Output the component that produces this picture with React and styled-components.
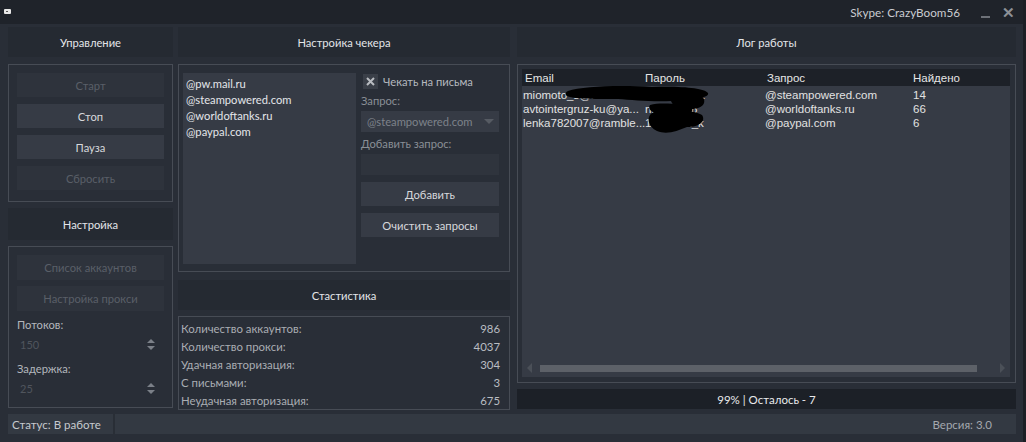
import React from "react";
import styled, { createGlobalStyle } from "styled-components";

const Global = createGlobalStyle`
  html, body { margin: 0; padding: 0; background: #1c1f25; overflow: hidden; }
  body { font-family: Lato, "Noto Sans", sans-serif; font-size: 11px; }
  * { box-sizing: border-box; }
`;

const Window = styled.div`
  width: 1023px;
  height: 442px;
  background: #292e37;
  display: flex;
  flex-direction: column;
`;

const TitleBar = styled.div`
  height: 24px;
  background: #1f232a;
  display: flex;
  align-items: center;
  padding: 0 0 0 4px;
  color: #c9ccd1;
`;

const AppIcon = styled.div`
  width: 7px;
  height: 5px;
  background: #e8e8e8;
  border-radius: 1px;
  position: relative;
  margin-top: -2px;
  &::after {
    content: "";
    position: absolute;
    left: 2px;
    top: 2px;
    width: 2px;
    height: 1px;
    background: #555;
  }
`;

const TitleText = styled.div`
  margin-left: auto;
  font-size: 11.7px;
  margin-right: 17px;
`;

const WinBtn = styled.div`
  width: ${(p) => p.$w}px;
  display: flex;
  justify-content: center;
  align-items: center;
  color: #8d9197;
  font-size: ${(p) => p.$fs}px;
  font-weight: bold;
  height: 24px;
`;

const Minimize = styled.div`
  width: 9px;
  height: 2px;
  background: #6d7178;
  margin-top: 9px;
`;

const Body = styled.div`
  display: flex;
  padding: 3px 7px 0 8px;
  height: 386px;
`;

const Column = styled.div`
  width: ${(p) => p.$w}px;
  margin-right: ${(p) => p.$mr || 0}px;
  display: flex;
  flex-direction: column;
`;

const Header = styled.div`
  height: ${(p) => p.$h || 30}px;
  flex: none;
  background: #252a32;
  display: flex;
  align-items: center;
  justify-content: center;
  color: #e3e5e9;
  font-size: 11.2px;
  margin-top: ${(p) => p.$mt || 0}px;
  margin-bottom: ${(p) => p.$mb || 7}px;
`;

const Group = styled.div`
  border: 1px solid #474c55;
  height: ${(p) => p.$h}px;
  flex: none;
  padding: ${(p) => p.$pad || "8px"};
  display: flex;
  flex-direction: ${(p) => p.$dir || "column"};
  gap: ${(p) => p.$gap || 0}px;
`;

const Button = styled.div`
  height: ${(p) => p.$h || 24}px;
  flex: none;
  margin-top: ${(p) => p.$mt || 0}px;
  background: ${(p) => (p.$disabled ? "#2e333c" : "#363b45")};
  color: ${(p) => (p.$disabled ? "#5a5f68" : "#d6d8dc")};
  display: flex;
  align-items: center;
  justify-content: center;
  font-size: 11.2px;
`;

const FieldLabel = styled.div`
  color: ${(p) => p.$color || "#b3b7bd"};
  font-size: 11.2px;
  line-height: 14px;
  margin-top: ${(p) => p.$mt || 0}px;
`;

const Spin = styled.div`
  height: 23px;
  display: flex;
  align-items: center;
  padding-left: 3px;
  color: #50555d;
  font-size: 11px;
  margin-top: 2px;
`;

const SpinArrows = styled.div`
  margin-left: auto;
  margin-right: 9px;
  display: flex;
  flex-direction: column;
  gap: 3px;
`;

const TriUp = styled.div`
  width: 0;
  height: 0;
  border-left: 4px solid transparent;
  border-right: 4px solid transparent;
  border-bottom: 4px solid #7b8088;
`;

const TriDown = styled(TriUp)`
  border-bottom: none;
  border-top: 4px solid #7b8088;
`;

const ListBox = styled.div`
  width: 173px;
  background: #363b45;
  padding: 3px 3px;
  color: #e4e6ea;
  font-size: 11.2px;
  line-height: 16px;
`;

const RightCtrls = styled.div`
  width: 138px;
  margin-left: 5px;
  display: flex;
  flex-direction: column;
`;

const CheckRow = styled.div`
  display: flex;
  align-items: center;
  gap: 5px;
  margin-left: 2px;
  color: #b5b9bf;
  font-size: 11.2px;
  height: 16px;
`;

const CheckBox = styled.div`
  width: 15px;
  height: 15px;
  background: #3a3f48;
  display: flex;
  align-items: center;
  justify-content: center;
`;

const Combo = styled.div`
  height: 21px;
  background: #363b45;
  color: #7d828a;
  display: flex;
  align-items: center;
  padding-left: 6px;
  margin-top: 3px;
  font-size: 11.2px;
`;

const ComboArrow = styled.div`
  margin-left: auto;
  margin-right: 5px;
  width: 0;
  height: 0;
  border-left: 5px solid transparent;
  border-right: 5px solid transparent;
  border-top: 5px solid #565b63;
`;

const Input = styled.div`
  height: 21px;
  background: #2f343d;
  margin-top: 3px;
`;

const StatRow = styled.div`
  display: flex;
  justify-content: space-between;
  color: #a9adb3;
  font-size: 11.4px;
  height: 18.5px;
  align-items: center;
`;

const StatVal = styled.span`
  color: #b9bdc2;
`;

const Table = styled.div`
  flex: 1;
  background: #363b45;
  display: flex;
  flex-direction: column;
  position: relative;
  font-family: "Liberation Sans", Arial, sans-serif;
  font-size: 11.5px;
`;

const THead = styled.div`
  height: 17px;
  background: #1d2128;
  display: grid;
  grid-template-columns: 120px 122px 146px 1fr;
  align-items: center;
  color: #e6e6e6;
  padding-left: 3px;
`;

const TRow = styled.div`
  height: 14px;
  display: grid;
  grid-template-columns: 120px 122px 146px 1fr;
  align-items: center;
  color: #e2e2e2;
  padding-left: 1px;
  white-space: nowrap;
`;

const Cell = styled.div`
  padding-left: ${(p) => p.$pl || 0}px;
`;

const RowsWrap = styled.div`
  padding-top: 2px;
  flex: 1;
`;

const HScroll = styled.div`
  height: 14px;
  display: flex;
  align-items: center;
  padding: 0 5px;
  margin-bottom: 2px;
`;

const ArrowL = styled.div`
  width: 0;
  height: 0;
  border-top: 5px solid transparent;
  border-bottom: 5px solid transparent;
  border-right: 5px solid #4b5058;
`;

const ArrowR = styled(ArrowL)`
  border-right: none;
  border-left: 5px solid #4b5058;
`;

const Thumb = styled.div`
  height: 7px;
  background: #5d6168;
  margin: 0 23px 0 8px;
  flex: 1;
`;

const Redact = styled.svg`
  position: absolute;
  left: 0;
  top: 0;
  pointer-events: none;
`;

const Progress = styled.div`
  height: 20px;
  background: #1c2027;
  margin-top: 6px;
  display: flex;
  align-items: center;
  justify-content: center;
  color: #e9eaec;
  font-size: 11.5px;
`;

const StatusBar = styled.div`
  height: 20px;
  margin: 4px 7px 0 8px;
  background: #333942;
  display: flex;
  align-items: center;
  color: #c6c9ce;
  font-size: 11.5px;
`;

const StatusLeft = styled.div`
  padding-left: 4px;
  width: 107px;
  height: 20px;
  display: flex;
  align-items: center;
  border-right: 2px solid #292e36;
`;

const Version = styled.div`
  margin-left: auto;
  margin-right: 24px;
  color: #a4a8ae;
`;

const rows = [
  ["miomoto_s@ramb", "sakura1991", "@steampowered.com", "14"],
  ["avtointergruz-ku@ya...", "nikita1988", "@worldoftanks.ru", "66"],
  ["lenka782007@ramble...", "123lenka_k", "@paypal.com", "6"],
];

export default function App() {
  return (
    <>
      <Global />
      <Window>
        <TitleBar>
          <AppIcon />
          <TitleText>Skype: CrazyBoom56</TitleText>
          <WinBtn $w={16}>
            <Minimize />
          </WinBtn>
          <WinBtn $w={30} $fs={15}>✕</WinBtn>
        </TitleBar>
        <Body>
          <Column $w={165} $mr={5}>
            <Header>Управление</Header>
            <Group $h={138} $gap={7}>
              <Button $disabled>Старт</Button>
              <Button>Стоп</Button>
              <Button>Пауза</Button>
              <Button $disabled>Сбросить</Button>
            </Group>
            <Header $mt={6} $mb={6} $h={32}>
              Настройка
            </Header>
            <Group $h={162}>
              <Button $disabled $h={25}>Список аккаунтов</Button>
              <Button $disabled $h={25} $mt={6}>
                Настройка прокси
              </Button>
              <FieldLabel $mt={7}>Потоков:</FieldLabel>
              <Spin>
                150
                <SpinArrows>
                  <TriUp />
                  <TriDown />
                </SpinArrows>
              </Spin>
              <FieldLabel $mt={6}>Задержка:</FieldLabel>
              <Spin>
                25
                <SpinArrows>
                  <TriUp />
                  <TriDown />
                </SpinArrows>
              </Spin>
            </Group>
          </Column>
          <Column $w={332} $mr={7}>
            <Header>Настройка чекера</Header>
            <Group $h={208} $dir="row" $pad="8px 10px 7px 4px">
              <ListBox>
                <div>@pw.mail.ru</div>
                <div>@steampowered.com</div>
                <div>@worldoftanks.ru</div>
                <div>@paypal.com</div>
              </ListBox>
              <RightCtrls>
                <CheckRow>
                  <CheckBox>
                    <svg width="9" height="9" viewBox="0 0 9 9">
                      <path d="M1 1L8 8M8 1L1 8" stroke="#b9bcc1" strokeWidth="2" />
                    </svg>
                  </CheckBox>
                  Чекать на письма
                </CheckRow>
                <FieldLabel $mt={5} $color="#8a8f96">Запрос:</FieldLabel>
                <Combo>
                  @steampowered.com
                  <ComboArrow />
                </Combo>
                <FieldLabel $mt={5} $color="#8a8f96">Добавить запрос:</FieldLabel>
                <Input />
                <Button $mt={7}>Добавить</Button>
                <Button $mt={7}>Очистить запросы</Button>
              </RightCtrls>
            </Group>
            <Header $mt={8} $mb={6}>Стастистика</Header>
            <Group $h={94} $pad="3px 9px 0 2px">
              <StatRow>
                Количество аккаунтов:<StatVal>986</StatVal>
              </StatRow>
              <StatRow>
                Количество прокси:<StatVal>4037</StatVal>
              </StatRow>
              <StatRow>
                Удачная авторизация:<StatVal>304</StatVal>
              </StatRow>
              <StatRow>
                С письмами:<StatVal>3</StatVal>
              </StatRow>
              <StatRow>
                Неудачная авторизация:<StatVal>675</StatVal>
              </StatRow>
            </Group>
          </Column>
          <Column $w={499}>
            <Header>Лог работы</Header>
            <Group $h={319} $pad="4px 5px 5px 4px">
              <Table>
                <THead>
                  <div>Email</div>
                  <div>Пароль</div>
                  <div>Запрос</div>
                  <div>Найдено</div>
                </THead>
                <RowsWrap>
                  {rows.map((r, i) => (
                    <TRow key={i}>
                      <Cell>{r[0]}</Cell>
                      <Cell $pl={2}>{r[1]}</Cell>
                      <Cell>{r[2]}</Cell>
                      <Cell $pl={2}>{r[3]}</Cell>
                    </TRow>
                  ))}
                </RowsWrap>
                <HScroll>
                  <ArrowL />
                  <Thumb />
                  <ArrowR />
                </HScroll>
                <Redact width="200" height="70" viewBox="0 0 200 70">
                  <path
                    d="M46 22 C60 17 100 16 130 18 C160 17 182 19 186 24 C188 29 170 31 150 32 C130 33 110 31 96 30 C75 30 55 30 48 28 C43 27 42 24 46 22 Z"
                    fill="#000"
                  />
                  <path
                    d="M150 24 C165 22 178 22 182 30 C184 38 175 40 165 41 C158 42 152 38 150 34 C148 30 146 26 150 24 Z"
                    fill="#000"
                  />
                  <path
                    d="M130 44 C140 40 172 40 180 46 C184 52 178 58 165 58 C155 62 145 66 135 62 C126 58 124 48 130 44 Z"
                    fill="#000"
                  />
                  <path
                    d="M128 36 C140 33 162 35 170 40 C172 45 160 47 148 47 C136 47 124 42 128 36 Z"
                    fill="#000"
                  />
                </Redact>
              </Table>
            </Group>
            <Progress>99% | Осталось - 7</Progress>
          </Column>
        </Body>
        <StatusBar>
          <StatusLeft>Статус: В работе</StatusLeft>
          <Version>Версия: 3.0</Version>
        </StatusBar>
      </Window>
    </>
  );
}
